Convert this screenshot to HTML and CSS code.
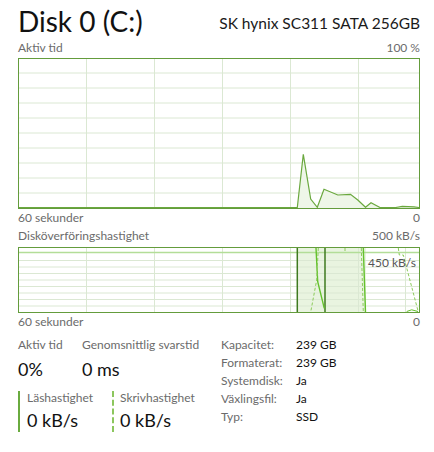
FILE: index.html
```html
<!DOCTYPE html>
<html lang="sv">
<head>
<meta charset="utf-8">
<title>Disk 0 (C:)</title>
<link rel="stylesheet" href="styles.css">
</head>
<body>
<div class="panel">
  <header class="head">
    <h1 class="title">Disk 0 (C:)</h1>
    <div class="model">SK hynix SC311 SATA 256GB</div>
  </header>

  <div class="axis axis-top"><span>Aktiv tid</span><span>100 %</span></div>
  <div class="chart chart-active">
    <svg class="plot" viewBox="0 0 400 149" preserveAspectRatio="none">
      <g class="grid">
        <line x1="0" y1="14" x2="400" y2="14"/><line x1="0" y1="29" x2="400" y2="29"/>
        <line x1="0" y1="44" x2="400" y2="44"/><line x1="0" y1="59" x2="400" y2="59"/>
        <line x1="0" y1="74" x2="400" y2="74"/><line x1="0" y1="89" x2="400" y2="89"/>
        <line x1="0" y1="104" x2="400" y2="104"/><line x1="0" y1="119" x2="400" y2="119"/>
        <line x1="0" y1="134" x2="400" y2="134"/>
        <line x1="67.5" y1="0" x2="67.5" y2="149"/><line x1="135.5" y1="0" x2="135.5" y2="149"/>
        <line x1="203.5" y1="0" x2="203.5" y2="149"/><line x1="271.5" y1="0" x2="271.5" y2="149"/>
        <line x1="339.5" y1="0" x2="339.5" y2="149"/>
      </g>
      <polygon class="area" points="278.3,149 284.3,95.3 291.7,140 298.3,148.5 305,130.3 318.8,136 331.5,135.3 338.8,141 346.5,148.3 352,143.7 361,148.7 376.7,149 383.3,147.5 395,148 400,149"/>
      <polyline class="line" points="0,148.5 278.3,148.5 284.3,95.3 291.7,140 298.3,148.3 305,130.3 318.8,136 331.5,135.3 338.8,141 346.5,148.3 352,143.7 361,148.5 376.7,148.5 383.3,147.3 395,147.8 400,148.5"/>
    </svg>
  </div>
  <div class="axis axis-bottom"><span>60 sekunder</span><span>0</span></div>

  <div class="axis axis-top2"><span>Disköverföringshastighet</span><span>500 kB/s</span></div>
  <div class="chart chart-rate">
    <svg class="plot" viewBox="0 0 400 64" preserveAspectRatio="none">
      <rect class="shade" x="278" y="0" width="69" height="64"/>
      <g class="grid">
        <line x1="0" y1="12.5" x2="400" y2="12.5"/><line x1="0" y1="19" x2="400" y2="19"/>
        <line x1="0" y1="25.5" x2="400" y2="25.5"/><line x1="0" y1="32" x2="400" y2="32"/>
        <line x1="0" y1="38.5" x2="400" y2="38.5"/><line x1="0" y1="45" x2="400" y2="45"/>
        <line x1="0" y1="51.5" x2="400" y2="51.5"/><line x1="0" y1="58" x2="400" y2="58"/>
        <line x1="67.5" y1="0" x2="67.5" y2="64"/><line x1="135.5" y1="0" x2="135.5" y2="64"/>
        <line x1="203.5" y1="0" x2="203.5" y2="64"/><line x1="271.5" y1="0" x2="271.5" y2="64"/>
        <line x1="339.5" y1="0" x2="339.5" y2="64"/><line x1="386.5" y1="0" x2="386.5" y2="64"/>
      </g>
      <line class="limit" x1="0" y1="4.5" x2="400" y2="4.5"/>
      <line class="dark" x1="278.3" y1="0" x2="278.3" y2="64"/>
      <line class="dark" x1="306" y1="0" x2="306" y2="64"/>
      <polyline class="bright" points="297,0 298.7,33.7 305.3,60.3"/>
      <polyline class="dash" points="299.3,0 297.7,32 291.7,64"/>
      <line class="dash" x1="326" y1="0" x2="326" y2="5"/>
      <line class="dash" x1="342.3" y1="0" x2="344.3" y2="64"/>
      <line class="bright" x1="344.3" y1="0" x2="346.5" y2="64"/>
      <polyline class="dash" points="379.3,0 380.3,7 384.3,7 399.3,64"/>
      <polyline class="bright thin" points="387.7,63.5 392.7,61.8 399,63.5"/>
    </svg>
    <span class="marker">450 kB/s</span>
  </div>
  <div class="axis axis-bottom"><span>60 sekunder</span><span>0</span></div>

  <section class="stats">
    <div class="live">
      <div class="pair">
        <div class="stat stat-active">
          <div class="label">Aktiv tid</div>
          <div class="value">0%</div>
        </div>
        <div class="stat">
          <div class="label">Genomsnittlig svarstid</div>
          <div class="value">0 ms</div>
        </div>
      </div>
      <div class="pair pair-io">
        <div class="io io-read">
          <div class="label">Läshastighet</div>
          <div class="value">0 kB/s</div>
        </div>
        <div class="io io-write">
          <div class="label">Skrivhastighet</div>
          <div class="value">0 kB/s</div>
        </div>
      </div>
    </div>
    <dl class="props">
      <div class="prop"><dt>Kapacitet:</dt><dd>239 GB</dd></div>
      <div class="prop"><dt>Formaterat:</dt><dd>239 GB</dd></div>
      <div class="prop"><dt>Systemdisk:</dt><dd>Ja</dd></div>
      <div class="prop"><dt>Växlingsfil:</dt><dd>Ja</dd></div>
      <div class="prop"><dt>Typ:</dt><dd>SSD</dd></div>
    </dl>
  </section>
</div>
</body>
</html>
```

FILE: styles.css
```css
* { box-sizing: border-box; }

html, body {
  margin: 0;
  padding: 0;
  background: #ffffff;
}

body {
  font-family: "Lato", "Noto Sans", sans-serif;
  color: #1a1a1a;
  width: 434px;
  height: 452px;
  overflow: hidden;
}

.panel {
  padding: 5px 14px 0 18px;
}

.head {
  display: flex;
  justify-content: space-between;
  align-items: flex-end;
  height: 32px;
}

.title {
  margin: 0;
  font-size: 28px;
  font-weight: 400;
  line-height: 32px;
  color: #111;
}

.model {
  font-size: 15.5px;
  line-height: 20px;
  padding-bottom: 4px;
  color: #1a1a1a;
}

.axis {
  display: flex;
  justify-content: space-between;
  font-size: 12px;
  line-height: 16px;
  height: 16px;
  color: #6b6b6b;
}

.axis-top { margin-top: 3px; }
.axis-top2 { margin-top: 2px; }
.axis-bottom { margin-top: 1px; }

.chart {
  position: relative;
  border: 1px solid #649c3c;
  margin-top: 2px;
}

.chart-active { height: 151px; }
.chart-rate { height: 66px; margin-top: 3px; }

.plot {
  display: block;
  width: 100%;
  height: 100%;
}

.grid line {
  stroke: #dbe8d3;
  stroke-width: 1;
}

.area { fill: #eef6e8; }

.line {
  fill: none;
  stroke: #6aa83e;
  stroke-width: 1.2;
}

.shade { fill: #e9f4e0; }

.limit {
  stroke: #b3dd98;
  stroke-width: 1.3;
}

.dark {
  stroke: #3e7a1f;
  stroke-width: 1.5;
}

.bright {
  fill: none;
  stroke: #64c12c;
  stroke-width: 1.4;
}

.bright.thin { stroke-width: 1; }

.dash {
  fill: none;
  stroke: #8ccc5a;
  stroke-width: 1;
  stroke-dasharray: 3 2;
}

.marker {
  position: absolute;
  top: 8px;
  right: 3px;
  font-size: 12px;
  line-height: 14px;
  color: #555;
}

.stats {
  display: flex;
  margin-top: 6px;
}

.live {
  width: 203px;
}

.pair {
  display: flex;
}

.stat-active { width: 64px; }

.label {
  font-size: 12px;
  line-height: 18px;
  color: #6b6b6b;
  white-space: nowrap;
}

.value {
  font-size: 18px;
  line-height: 22px;
  margin-top: 4px;
  color: #111;
}

.pair-io {
  margin-top: 11px;
}

.io {
  padding-left: 7px;
  height: 41px;
}

.io .label { line-height: 13px; }
.io .value { margin-top: 5px; }

.io-read {
  width: 94px;
  border-left: 2px solid #6aab3f;
}

.io-write {
  border-left: 2px dashed #8cc65e;
  padding-left: 6px;
}

.props {
  margin: 0;
  font-size: 12px;
  line-height: 18px;
}

.prop {
  display: flex;
}

.prop dt {
  width: 75px;
  color: #6b6b6b;
}

.prop dd {
  margin: 0;
  color: #111;
}
```
